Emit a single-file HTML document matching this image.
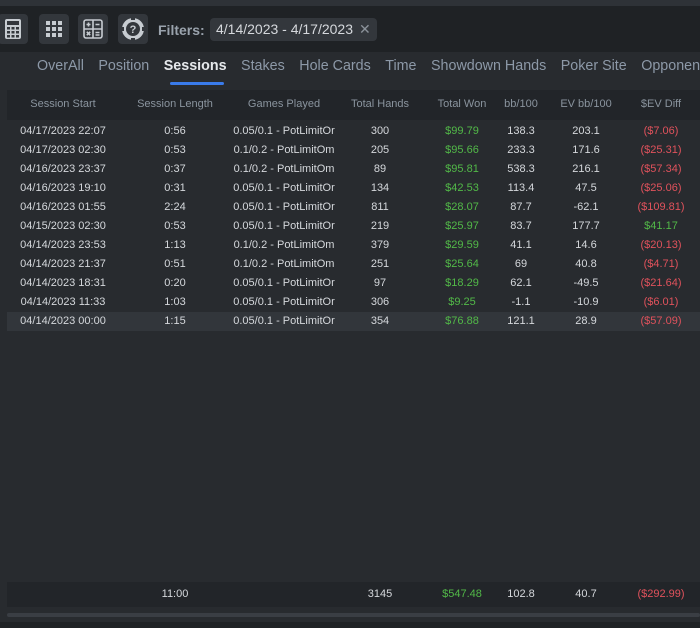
<!DOCTYPE html>
<html><head><style>
*{margin:0;padding:0;box-sizing:border-box}
body{width:700px;height:628px;background:#1f2225;font-family:"Liberation Sans",sans-serif;position:relative;overflow:hidden;color:#d5d8dc}
.top{position:absolute;left:0;top:0;width:700px;height:6px;background:#2e3237}
.btn{position:absolute;top:14px;width:30px;height:30px;background:#33373c;border-radius:4px;display:flex;align-items:center;justify-content:center}
.flt{position:absolute;left:158px;top:22px;font-size:14px;font-weight:bold;color:#9aa3ad}
.chip{position:absolute;left:210px;top:18px;width:167px;height:23px;background:#33373c;border-radius:4px;font-size:14px;color:#d5d8dc;padding:3px 6px;white-space:nowrap}
.chip span{color:#8c939b;margin-left:6px}
.panel{position:absolute;left:0;top:52px;width:700px;height:570px;background:#282b2f}
.tabs{position:absolute;left:37px;top:58px;width:663px;overflow:hidden;font-size:14.3px;color:#8d99a8;white-space:nowrap}
.tabs span,.tabs b{margin-right:14.5px}
.tabs b{color:#e6e9ec}
.ul{position:absolute;left:170px;top:82px;width:54px;height:3px;background:#3a7bea;border-radius:2px}
.hdr{position:absolute;left:7px;top:90px;width:693px;height:30px;background:#222529}
.row{position:absolute;left:7px;width:693px;height:19px;font-size:11px}
.c{position:absolute;top:3px;transform:translateX(-50%);white-space:nowrap}
.hdr .c{top:8px;color:#8a949e;font-size:11px}
.g{color:#52b948}.r{color:#e0525c}
.foot{position:absolute;left:7px;top:582px;width:693px;height:25px;background:#222529;font-size:11px}
.foot .c{top:6px}
.sb{position:absolute;left:7px;top:613px;width:693px;height:4px;background:#3a3e44;border-radius:2px}
.bot{position:absolute;left:0;top:622px;width:700px;height:6px;background:#1f2225}
</style></head><body>
<div class="top"></div>
<div class="btn" style="left:-2px"><svg width="18" height="22" viewBox="0 0 18 22"><rect x="1" y="1" width="16" height="20" rx="2" fill="#c7ccd1"/><rect x="3" y="3" width="12" height="4" fill="#33373c"/><g fill="#33373c"><rect x="3" y="9" width="3" height="2.5"/><rect x="7.5" y="9" width="3" height="2.5"/><rect x="12" y="9" width="3" height="2.5"/><rect x="3" y="13" width="3" height="2.5"/><rect x="7.5" y="13" width="3" height="2.5"/><rect x="12" y="13" width="3" height="2.5"/><rect x="3" y="17" width="3" height="2.5"/><rect x="7.5" y="17" width="3" height="2.5"/><rect x="12" y="17" width="3" height="2.5"/></g></svg></div>
<div class="btn" style="left:39px"><svg width="18" height="18" viewBox="0 0 18 18" fill="#c7ccd1"><rect x="1" y="1" width="4" height="4"/><rect x="7" y="1" width="4" height="4"/><rect x="13" y="1" width="4" height="4"/><rect x="1" y="7" width="4" height="4"/><rect x="7" y="7" width="4" height="4"/><rect x="13" y="7" width="4" height="4"/><rect x="1" y="13" width="4" height="4"/><rect x="7" y="13" width="4" height="4"/><rect x="13" y="13" width="4" height="4"/></svg></div>
<div class="btn" style="left:78px"><svg width="20" height="20" viewBox="0 0 20 20" fill="none" stroke="#c7ccd1" stroke-width="1.6"><rect x="1" y="1" width="18" height="18" rx="2"/><line x1="10" y1="1" x2="10" y2="19"/><line x1="1" y1="10" x2="19" y2="10"/><path d="M3.5 5.5h4M5.5 3.5v4M12.5 5.5h4M3.8 12.8l3.4 3.4M7.2 12.8l-3.4 3.4M12.5 13.5h4M12.5 16h4"/></svg></div>
<div class="btn" style="left:118px"><svg width="24" height="24" viewBox="0 0 24 24"><circle cx="12" cy="12" r="11" fill="#c7ccd1"/><circle cx="12" cy="12" r="7" fill="#33373c"/><g fill="#33373c"><rect x="10" y="0" width="4" height="3"/><rect x="10" y="21" width="4" height="3"/><rect x="0" y="10" width="3" height="4"/><rect x="21" y="10" width="3" height="4"/></g><text x="12" y="16" font-size="11" font-weight="bold" fill="#c7ccd1" text-anchor="middle" font-family="Liberation Sans">?</text></svg></div>
<div class="flt">Filters:</div>
<div class="chip">4/14/2023 - 4/17/2023<span>✕</span></div>
<div class="panel"></div>
<div class="tabs"><span>OverAll</span><span>Position</span><b>Sessions</b><span>Stakes</span><span>Hole Cards</span><span>Time</span><span>Showdown Hands</span><span>Poker Site</span><span>Opponents</span></div>
<div class="ul"></div>
<div class="hdr"><span class="c" style="left:56px">Session Start</span><span class="c" style="left:168px">Session Length</span><span class="c" style="left:277px">Games Played</span><span class="c" style="left:373px">Total Hands</span><span class="c" style="left:455px">Total Won</span><span class="c" style="left:514px">bb/100</span><span class="c" style="left:579px">EV bb/100</span><span class="c" style="left:654px">$EV Diff</span></div>
<div class="row" style="top:122px"><span class="c" style="left:56px">04/17/2023 22:07</span><span class="c" style="left:168px">0:56</span><span class="c" style="left:277px">0.05/0.1 - PotLimitOr</span><span class="c" style="left:373px">300</span><span class="c g" style="left:455px">$99.79</span><span class="c" style="left:514px">138.3</span><span class="c" style="left:579px">203.1</span><span class="c r" style="left:654px">($7.06)</span></div>
<div class="row" style="top:141px"><span class="c" style="left:56px">04/17/2023 02:30</span><span class="c" style="left:168px">0:53</span><span class="c" style="left:277px">0.1/0.2 - PotLimitOm</span><span class="c" style="left:373px">205</span><span class="c g" style="left:455px">$95.66</span><span class="c" style="left:514px">233.3</span><span class="c" style="left:579px">171.6</span><span class="c r" style="left:654px">($25.31)</span></div>
<div class="row" style="top:160px"><span class="c" style="left:56px">04/16/2023 23:37</span><span class="c" style="left:168px">0:37</span><span class="c" style="left:277px">0.1/0.2 - PotLimitOm</span><span class="c" style="left:373px">89</span><span class="c g" style="left:455px">$95.81</span><span class="c" style="left:514px">538.3</span><span class="c" style="left:579px">216.1</span><span class="c r" style="left:654px">($57.34)</span></div>
<div class="row" style="top:179px"><span class="c" style="left:56px">04/16/2023 19:10</span><span class="c" style="left:168px">0:31</span><span class="c" style="left:277px">0.05/0.1 - PotLimitOr</span><span class="c" style="left:373px">134</span><span class="c g" style="left:455px">$42.53</span><span class="c" style="left:514px">113.4</span><span class="c" style="left:579px">47.5</span><span class="c r" style="left:654px">($25.06)</span></div>
<div class="row" style="top:198px"><span class="c" style="left:56px">04/16/2023 01:55</span><span class="c" style="left:168px">2:24</span><span class="c" style="left:277px">0.05/0.1 - PotLimitOr</span><span class="c" style="left:373px">811</span><span class="c g" style="left:455px">$28.07</span><span class="c" style="left:514px">87.7</span><span class="c" style="left:579px">-62.1</span><span class="c r" style="left:654px">($109.81)</span></div>
<div class="row" style="top:217px"><span class="c" style="left:56px">04/15/2023 02:30</span><span class="c" style="left:168px">0:53</span><span class="c" style="left:277px">0.05/0.1 - PotLimitOr</span><span class="c" style="left:373px">219</span><span class="c g" style="left:455px">$25.97</span><span class="c" style="left:514px">83.7</span><span class="c" style="left:579px">177.7</span><span class="c g" style="left:654px">$41.17</span></div>
<div class="row" style="top:236px"><span class="c" style="left:56px">04/14/2023 23:53</span><span class="c" style="left:168px">1:13</span><span class="c" style="left:277px">0.1/0.2 - PotLimitOm</span><span class="c" style="left:373px">379</span><span class="c g" style="left:455px">$29.59</span><span class="c" style="left:514px">41.1</span><span class="c" style="left:579px">14.6</span><span class="c r" style="left:654px">($20.13)</span></div>
<div class="row" style="top:255px"><span class="c" style="left:56px">04/14/2023 21:37</span><span class="c" style="left:168px">0:51</span><span class="c" style="left:277px">0.1/0.2 - PotLimitOm</span><span class="c" style="left:373px">251</span><span class="c g" style="left:455px">$25.64</span><span class="c" style="left:514px">69</span><span class="c" style="left:579px">40.8</span><span class="c r" style="left:654px">($4.71)</span></div>
<div class="row" style="top:274px"><span class="c" style="left:56px">04/14/2023 18:31</span><span class="c" style="left:168px">0:20</span><span class="c" style="left:277px">0.05/0.1 - PotLimitOr</span><span class="c" style="left:373px">97</span><span class="c g" style="left:455px">$18.29</span><span class="c" style="left:514px">62.1</span><span class="c" style="left:579px">-49.5</span><span class="c r" style="left:654px">($21.64)</span></div>
<div class="row" style="top:293px"><span class="c" style="left:56px">04/14/2023 11:33</span><span class="c" style="left:168px">1:03</span><span class="c" style="left:277px">0.05/0.1 - PotLimitOr</span><span class="c" style="left:373px">306</span><span class="c g" style="left:455px">$9.25</span><span class="c" style="left:514px">-1.1</span><span class="c" style="left:579px">-10.9</span><span class="c r" style="left:654px">($6.01)</span></div>
<div class="row" style="top:312px;background:#32363b"><span class="c" style="left:56px">04/14/2023 00:00</span><span class="c" style="left:168px">1:15</span><span class="c" style="left:277px">0.05/0.1 - PotLimitOr</span><span class="c" style="left:373px">354</span><span class="c g" style="left:455px">$76.88</span><span class="c" style="left:514px">121.1</span><span class="c" style="left:579px">28.9</span><span class="c r" style="left:654px">($57.09)</span></div>
<div class="foot"><span class="c" style="left:168px">11:00</span><span class="c" style="left:373px">3145</span><span class="c g" style="left:455px">$547.48</span><span class="c" style="left:514px">102.8</span><span class="c" style="left:579px">40.7</span><span class="c r" style="left:654px">($292.99)</span></div>
<div class="sb"></div>
<div class="bot"></div>
</body></html>
